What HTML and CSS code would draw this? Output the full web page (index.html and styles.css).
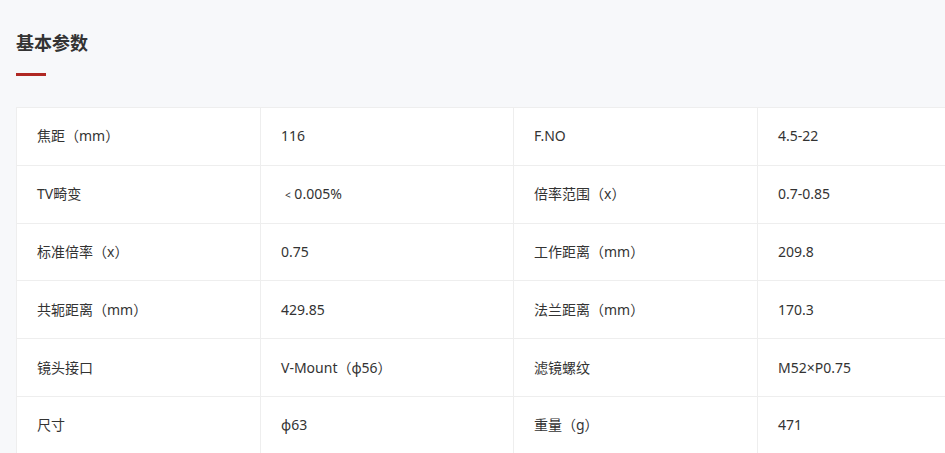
FILE: index.html
```html
<!DOCTYPE html>
<html lang="zh-CN">
<head>
<meta charset="utf-8">
<title>基本参数</title>
<link rel="stylesheet" href="styles.css">
</head>
<body>
<section class="params">
  <h2 class="params-title">基本参数</h2>
  <div class="params-bar"></div>
  <table class="params-table">
    <colgroup>
      <col class="c1"><col class="c2"><col class="c3"><col class="c4">
    </colgroup>
    <tbody>
      <tr><td>焦距（mm）</td><td>116</td><td>F.NO</td><td>4.5-22</td></tr>
      <tr><td>TV畸变</td><td><span class="lt">&lt;</span> 0.005%</td><td>倍率范围（x）</td><td>0.7-0.85</td></tr>
      <tr><td>标准倍率（x）</td><td>0.75</td><td>工作距离（mm）</td><td>209.8</td></tr>
      <tr><td>共轭距离（mm）</td><td>429.85</td><td>法兰距离（mm）</td><td>170.3</td></tr>
      <tr><td>镜头接口</td><td>V-Mount（φ56）</td><td>滤镜螺纹</td><td>M52×P0.75</td></tr>
      <tr><td>尺寸</td><td>φ63</td><td>重量（g）</td><td>471</td></tr>
    </tbody>
  </table>
</section>
</body>
</html>
```
FILE: styles.css
```css
html, body {
  margin: 0;
  padding: 0;
  background: #f7f8fa;
  overflow: hidden;
}
body {
  font-family: "Noto Sans", "Noto Sans CJK SC", sans-serif;
  color: #333;
}
.params {
  padding: 30px 0 0 16px;
}
.params-title {
  margin: 0;
  font-family: "Noto Sans CJK SC", sans-serif;
  font-size: 18px;
  line-height: 24px;
  font-weight: bold;
  color: #333;
}
.params-bar {
  width: 30px;
  height: 3px;
  background: #b02823;
  margin-top: 19px;
}
.params-table {
  margin-top: 31px;
  border-collapse: collapse;
  table-layout: fixed;
  width: 1000px;
  background: #fff;
}
.c1 { width: 244px; }
.c2 { width: 253px; }
.c3 { width: 244px; }
.c4 { width: 259px; }
.params-table td {
  border: 1px solid #eeeeee;
  height: 57.8px;
  padding: 0 0 0 20px;
  box-sizing: border-box;
  font-size: 14px;
  line-height: 20px;
  vertical-align: middle;
  color: #333;
  white-space: nowrap;
}
.lt {
  display: inline-block;
  font-size: 10px;
  margin-left: 4px;
}
```
